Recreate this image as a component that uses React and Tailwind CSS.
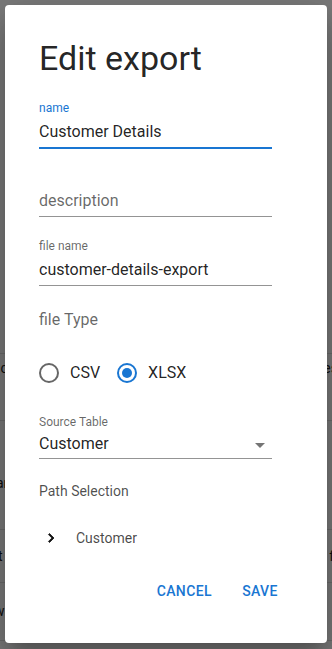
import React, { useState } from "react";

const font = { fontFamily: "Roboto, 'Noto Sans', Arial, sans-serif" };

function RadioIcon({ checked }) {
  return (
    <svg width="20" height="20" viewBox="0 0 20 20" className="shrink-0">
      <circle
        cx="10"
        cy="10"
        r="9"
        fill="none"
        stroke={checked ? "#1976d2" : "rgba(0,0,0,0.6)"}
        strokeWidth="2"
      />
      {checked && <circle cx="10" cy="10" r="5" fill="#1976d2" />}
    </svg>
  );
}

function Background() {
  // the page behind the dialog (a table), only its edges peek out
  return (
    <div className="flex flex-col w-full h-[649px] bg-white text-[14px] text-[#222]">
      <div className="h-[354px] border-b border-[#e0e0e0]" />
      <div className="h-[67px] border-b border-[#e0e0e0] flex justify-between pt-[4px]">
        <span className="-ml-[3px]">ic</span>
        <span className="-mr-[6px]">es</span>
      </div>
      <div className="h-[109px] border-b border-[#e0e0e0] flex items-end pb-[35px]">
        <span className="-ml-[4px]">ar</span>
      </div>
      <div className="h-[53px] border-b border-[#e0e0e0] flex justify-between items-center">
        <span className="-ml-[2px]">t</span>
        <span className="-mr-[2px]">f</span>
      </div>
      <div className="h-[58px] border-b border-[#e0e0e0] flex items-center">
        <span className="-ml-[6px]">w</span>
      </div>
    </div>
  );
}

export default function App() {
  const [fileType, setFileType] = useState("xlsx");

  return (
    <div className="relative w-full h-[649px] overflow-hidden" style={font}>
      <Background />

      {/* backdrop */}
      <div className="absolute inset-0 bg-[rgba(0,0,0,0.52)]" />

      {/* dialog */}
      <div className="absolute left-[5px] top-[5px] w-[322px] h-[638px] bg-white rounded-[4px] shadow-[0_11px_15px_-7px_rgba(0,0,0,0.2),0_24px_38px_3px_rgba(0,0,0,0.14),0_9px_46px_8px_rgba(0,0,0,0.12)] flex flex-col">
        <div className="pl-[34px] pt-[33px] w-[267px]">
          <h2 className="text-[34px] leading-[40px] text-[rgba(0,0,0,0.87)] font-normal">
            Edit export
          </h2>

          {/* name */}
          <div className="mt-[22px]">
            <div className="text-[12px] leading-[16px] text-[#1976d2]">name</div>
            <div className="mt-[4px] pb-[3px] text-[16px] leading-[24px] text-[rgba(0,0,0,0.87)] border-b-2 border-[#1976d2]">
              Customer Details
            </div>
          </div>

          {/* description */}
          <div className="mt-[40px] pb-[3px] text-[16px] leading-[24px] text-[rgba(0,0,0,0.6)] border-b border-[#949494]">
            description
          </div>

          {/* file name */}
          <div className="mt-[21px]">
            <div className="text-[12px] leading-[16px] text-[rgba(0,0,0,0.6)]">file name</div>
            <div className="mt-[4px] pb-[3px] text-[16px] leading-[24px] text-[rgba(0,0,0,0.87)] border-b border-[#949494]">
              customer-details-export
            </div>
          </div>

          {/* file type */}
          <div className="mt-[22px] text-[16px] leading-[24px] text-[rgba(0,0,0,0.6)]">
            file Type
          </div>
          <div className="mt-[20px] h-[42px] flex items-center text-[16px] text-[rgba(0,0,0,0.87)]">
            <button
              className="flex items-center"
              onClick={() => setFileType("csv")}
            >
              <RadioIcon checked={fileType === "csv"} />
              <span className="ml-[11px]">CSV</span>
            </button>
            <button
              className="flex items-center ml-[17px]"
              onClick={() => setFileType("xlsx")}
            >
              <RadioIcon checked={fileType === "xlsx"} />
              <span className="ml-[11px]">XLSX</span>
            </button>
          </div>

          {/* source table */}
          <div className="mt-[20px]">
            <div className="text-[12px] leading-[16px] text-[rgba(0,0,0,0.6)]">Source Table</div>
            <div className="mt-[2px] h-[27px] flex items-start justify-between text-[16px] leading-[24px] text-[rgba(0,0,0,0.87)] border-b border-[#949494]">
              <span>Customer</span>
              <svg width="24" height="24" viewBox="0 0 24 24" className="mt-[1px]">
                <path d="M7 10l5 5 5-5z" fill="rgba(0,0,0,0.54)" />
              </svg>
            </div>
          </div>

          {/* path selection */}
          <div className="mt-[22px] text-[14px] leading-[20px] text-[rgba(0,0,0,0.7)]">
            Path Selection
          </div>
          <div className="mt-[25px] h-[24px] flex items-center text-[14px] text-[rgba(0,0,0,0.72)]">
            <svg width="18" height="18" viewBox="0 0 24 24" className="ml-[3px]">
              <path
                d="M10 6 8.59 7.41 13.17 12l-4.58 4.59L10 18l6-6z"
                fill="#111"
                stroke="#111"
                strokeWidth="1"
              />
            </svg>
            <span className="ml-[16px]">Customer</span>
          </div>
        </div>

        {/* actions */}
        <div className="mt-[23px] pr-[35px] flex justify-end">
          <button className="px-[8px] py-[6px] min-w-[64px] text-[14px] leading-[24px] font-medium tracking-[0.4px] uppercase text-[#1976d2] rounded">
            Cancel
          </button>
          <button className="ml-[8px] px-[8px] py-[6px] min-w-[64px] text-[14px] leading-[24px] font-medium tracking-[0.4px] uppercase text-[#1976d2] rounded">
            Save
          </button>
        </div>
      </div>
    </div>
  );
}
